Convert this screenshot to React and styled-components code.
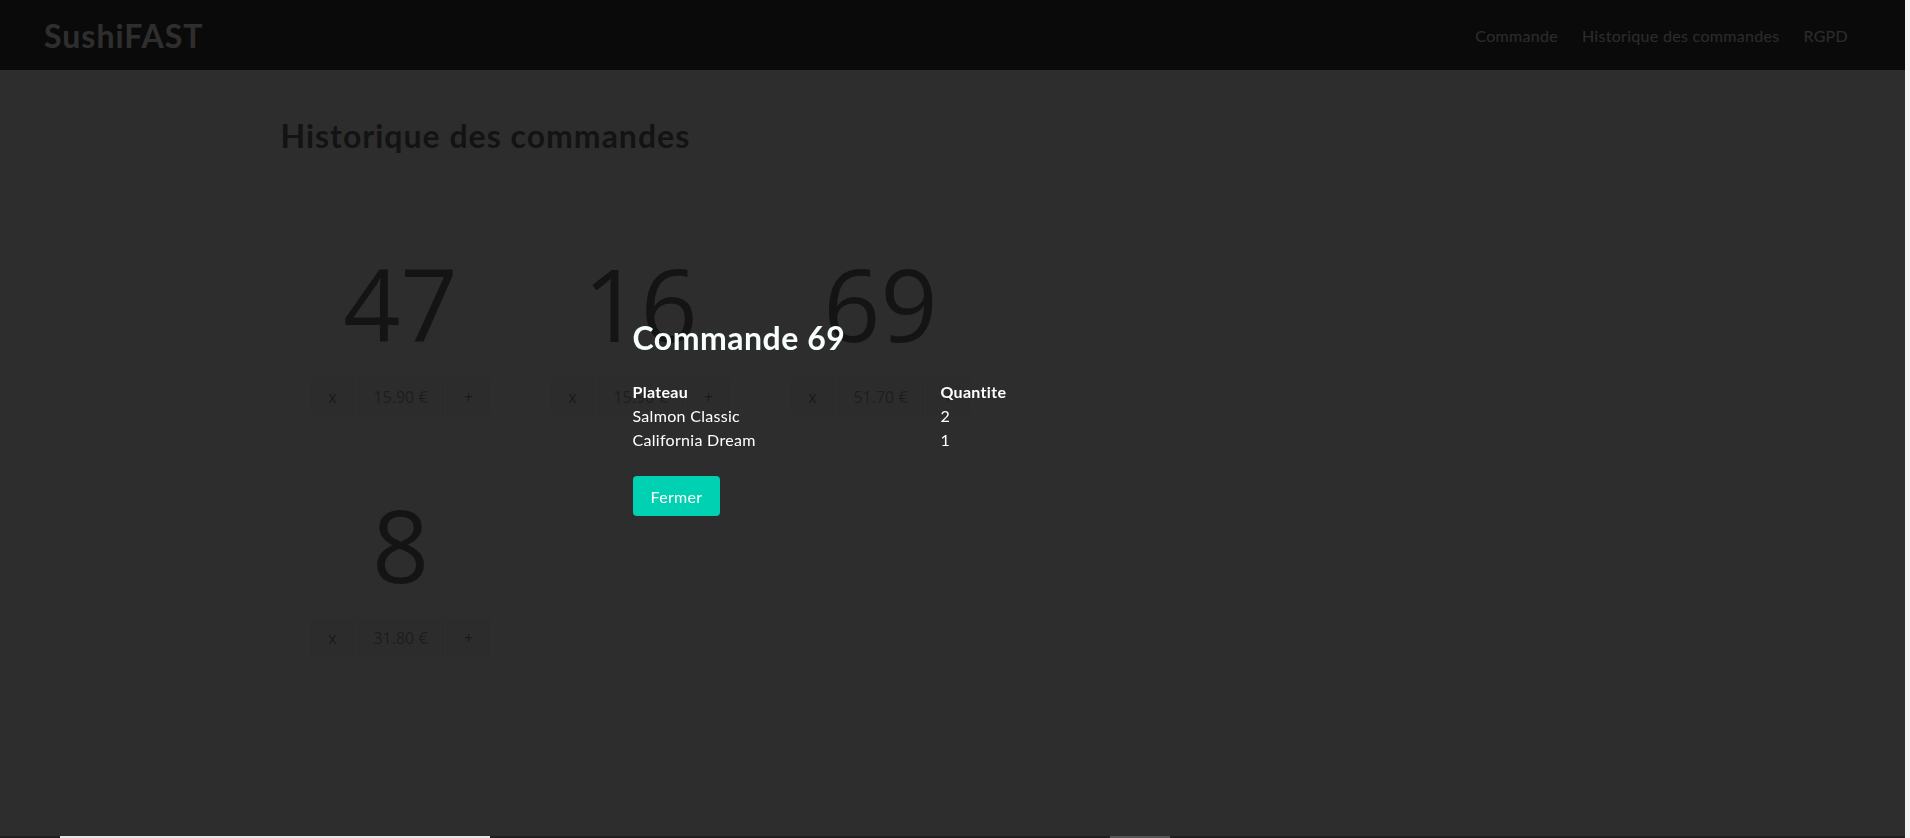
import React from 'react';
import styled, { createGlobalStyle } from 'styled-components';

const GlobalStyle = createGlobalStyle`
  html, body {
    margin: 0;
    padding: 0;
    height: 100%;
  }
  body {
    background: #fafafa;
    font-family: Lato, "Noto Sans", sans-serif;
    overflow: hidden;
  }
  * { box-sizing: border-box; }
`

const Page = styled.div`
  margin-right: 5px;
  min-height: 100vh;
  background: #fafafa;
`

const Navbar = styled.nav`
  height: 70px;
  background: #373737;
  display: flex;
  align-items: center;
  justify-content: space-between;
  padding: 0 57px 0 44px;
`
const Brand = styled.a`
  font-size: 32px;
  font-weight: 700;
  letter-spacing: 1px;
  color: #ffffff;
  text-decoration: none;
`
const Menu = styled.div`
  display: flex;
  gap: 24px;
`
const MenuLink = styled.a`
  font-size: 16px;
  letter-spacing: 0.3px;
  color: #f0f0f0;
  text-decoration: none;
`

const Container = styled.main`
  width: 1344px;
  margin: 0 auto;
  padding-top: 48px;
`
const Title = styled.h1`
  margin: 0;
  font-size: 32px;
  line-height: 36px;
  font-weight: 700;
  letter-spacing: 1px;
  color: #6b6b6b;
`

const Grid = styled.div`
  margin-top: 90px;
  display: grid;
  grid-template-columns: repeat(3, 240px);
  grid-auto-rows: 241px;
`
const Card = styled.div`
  padding-top: 9px;
  display: flex;
  flex-direction: column;
  align-items: center;
  font-family: "Open Sans", "Noto Sans", sans-serif;
`
const Number = styled.div`
  font-size: 100px;
  line-height: 100px;
  color: #707070;
`
const Controls = styled.div`
  margin-top: 25px;
  display: flex;
  gap: 3px;
`
const Control = styled.span`
  width: ${p => (p.$wide ? '87px' : '43px')};
  height: 37px;
  display: flex;
  align-items: center;
  justify-content: center;
  background: #f4f4f4;
  border: 1px solid #ececec;
  font-size: 16px;
  color: ${p => (p.$wide ? '#a3a3a3' : '#8e8e8e')};
`

const Overlay = styled.div`
  position: fixed;
  top: 0;
  left: 0;
  right: 5px;
  bottom: 2px;
  background: rgba(0, 0, 0, 0.82);
  display: flex;
  align-items: center;
  justify-content: center;
`
const ModalContent = styled.div`
  width: 640px;
  color: #ffffff;
`
const ModalTitle = styled.h2`
  margin: 0 0 24px;
  font-size: 32px;
  line-height: 36px;
  font-weight: 700;
  letter-spacing: 0.5px;
  color: #f6fffc;
`
const Table = styled.table`
  border-collapse: collapse;
  margin-bottom: 24px;
  font-size: 16px;
  line-height: 24px;
  letter-spacing: 0.3px;
  th, td {
    padding: 0;
    text-align: left;
    vertical-align: top;
  }
  th { font-weight: 700; }
  th:first-child { width: 308px; }
`
const Button = styled.button`
  height: 40px;
  padding: 0 18px;
  border: none;
  border-radius: 4px;
  background: #00d1b2;
  color: #ffffff;
  font-family: inherit;
  font-size: 16px;
  letter-spacing: 0.3px;
  cursor: pointer;
`

const ScrollRight = styled.div`
  position: fixed;
  top: 0;
  right: 0;
  width: 5px;
  height: 100%;
  background: #f1f1f1;
`
const ScrollBottom = styled.div`
  position: fixed;
  left: 0;
  right: 5px;
  bottom: 0;
  height: 2px;
  background: #1f1f1f;
`
const Thumb = styled.div`
  position: absolute;
  top: 0;
  height: 2px;
  left: ${p => p.$left}px;
  width: ${p => p.$width}px;
  background: ${p => p.$color};
`

const orders = [
  { id: 47, price: '15.90 €' },
  { id: 16, price: '15.90 €' },
  { id: 69, price: '51.70 €' },
  { id: 8, price: '31.80 €' },
];

const lines = [
  { name: 'Salmon Classic', qty: 2 },
  { name: 'California Dream', qty: 1 },
];

export default function App() {
  return (
    <>
      <GlobalStyle />
      <Page>
        <Navbar>
          <Brand href="#">SushiFAST</Brand>
          <Menu>
            <MenuLink href="#">Commande</MenuLink>
            <MenuLink href="#">Historique des commandes</MenuLink>
            <MenuLink href="#">RGPD</MenuLink>
          </Menu>
        </Navbar>
        <Container>
          <Title>Historique des commandes</Title>
          <Grid>
            {orders.map(o => (
              <Card key={o.id}>
                <Number>{o.id}</Number>
                <Controls>
                  <Control>x</Control>
                  <Control $wide>{o.price}</Control>
                  <Control>+</Control>
                </Controls>
              </Card>
            ))}
          </Grid>
        </Container>
      </Page>
      <Overlay>
        <ModalContent>
          <ModalTitle>Commande 69</ModalTitle>
          <Table>
            <thead>
              <tr>
                <th>Plateau</th>
                <th>Quantite</th>
              </tr>
            </thead>
            <tbody>
              {lines.map(l => (
                <tr key={l.name}>
                  <td>{l.name}</td>
                  <td>{l.qty}</td>
                </tr>
              ))}
            </tbody>
          </Table>
          <Button>Fermer</Button>
        </ModalContent>
      </Overlay>
      <ScrollRight />
      <ScrollBottom>
        <Thumb $left={60} $width={430} $color="#e6e6e6" />
        <Thumb $left={1110} $width={60} $color="#555555" />
      </ScrollBottom>
    </>
  );
}
